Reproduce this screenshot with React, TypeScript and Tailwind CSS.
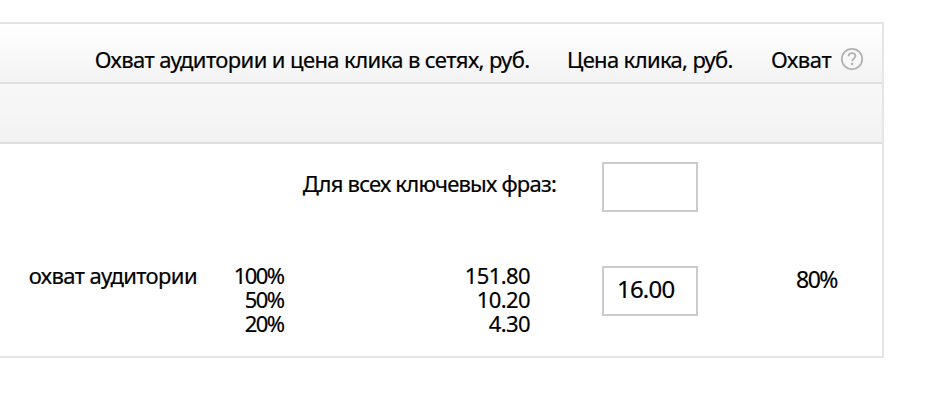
interface ReachRow {
  reach: string;
  price: string;
}

const reachRows: ReachRow[] = [
  { reach: '100%', price: '151.80' },
  { reach: '50%', price: '10.20' },
  { reach: '20%', price: '4.30' },
];

function HelpIcon() {
  return (
    <svg
      width="24"
      height="24"
      viewBox="0 0 24 24"
      fill="none"
      stroke="#b3b3b3"
      strokeWidth="1.8"
    >
      <circle cx="12" cy="12" r="10.2" />
      <path d="M8.5 9.3C8.5 7.3 9.8 6.2 12 6.2s3.5 1.2 3.5 2.9c0 2.4-3.4 2.4-3.4 5.2" />
      <path d="M11 17h2.2" strokeWidth="2.2" />
    </svg>
  );
}

function PriceInput({ label, value }: { label: string; value: string }) {
  return (
    <input
      type="text"
      aria-label={label}
      defaultValue={value}
      className="block h-[50px] w-24 border-2 border-[#cccccc] bg-white pb-[5px] pl-[13px] text-2xl tracking-[-0.8px] text-black outline-none"
    />
  );
}

function App() {
  return (
    <main className="h-[402px] w-[944px] overflow-hidden bg-white pt-[22px] font-['Noto_Sans','Open_Sans',sans-serif] text-[22px] leading-6 tracking-[-0.6px] whitespace-nowrap text-black [-webkit-text-stroke:0.2px_black]">
      <section className="h-[336px] w-[884px] border-y-2 border-r-2 border-[#e5e5e5]">
        <header className="flex h-[60px] border-b-2 border-[#dfdfdf] bg-linear-to-b from-white to-[#f3f3f3] pt-[23px]">
          <div className="w-[529.5px] text-right">
            Охват аудитории и цена клика в сетях, руб.
          </div>
          <div className="w-[241.5px] pl-[37.5px] tracking-[-0.65px]">
            Цена клика, руб.
          </div>
          <div className="flex w-[93px] justify-between">
            <span className="tracking-[-0.4px]">Охват</span>
            <HelpIcon />
          </div>
        </header>
        <div className="h-[60px] border-b-2 border-[#dfdfdf] bg-linear-to-b from-[#f8f8f8] to-[#f2f2f2]" />

        <div className="flex h-[119px] pt-[18px]">
          <div className="w-[556px] pt-[9px] text-right tracking-[-0.78px]">
            Для всех ключевых фраз:
          </div>
          <div className="pl-[46px]">
            <PriceInput label="Цена клика для всех фраз" value="" />
          </div>
        </div>

        <div className="flex">
          <div className="w-[197px] text-right">охват аудитории</div>
          <ul className="w-[333px]">
            {reachRows.map(({ reach, price }) => (
              <li key={reach} className="flex">
                <span className="w-[86.5px] text-right tracking-[-1.6px]">
                  {reach}
                </span>
                <span className="w-[246.5px] text-right">{price}</span>
              </li>
            ))}
          </ul>
          <div className="pt-[3px] pl-[72px]">
            <PriceInput label="Цена клика" value="16.00" />
          </div>
          <div className="w-[139px] pt-[4px] text-right text-[23px] tracking-[-1.5px]">
            80%
          </div>
        </div>
      </section>
    </main>
  );
}

export default App;
